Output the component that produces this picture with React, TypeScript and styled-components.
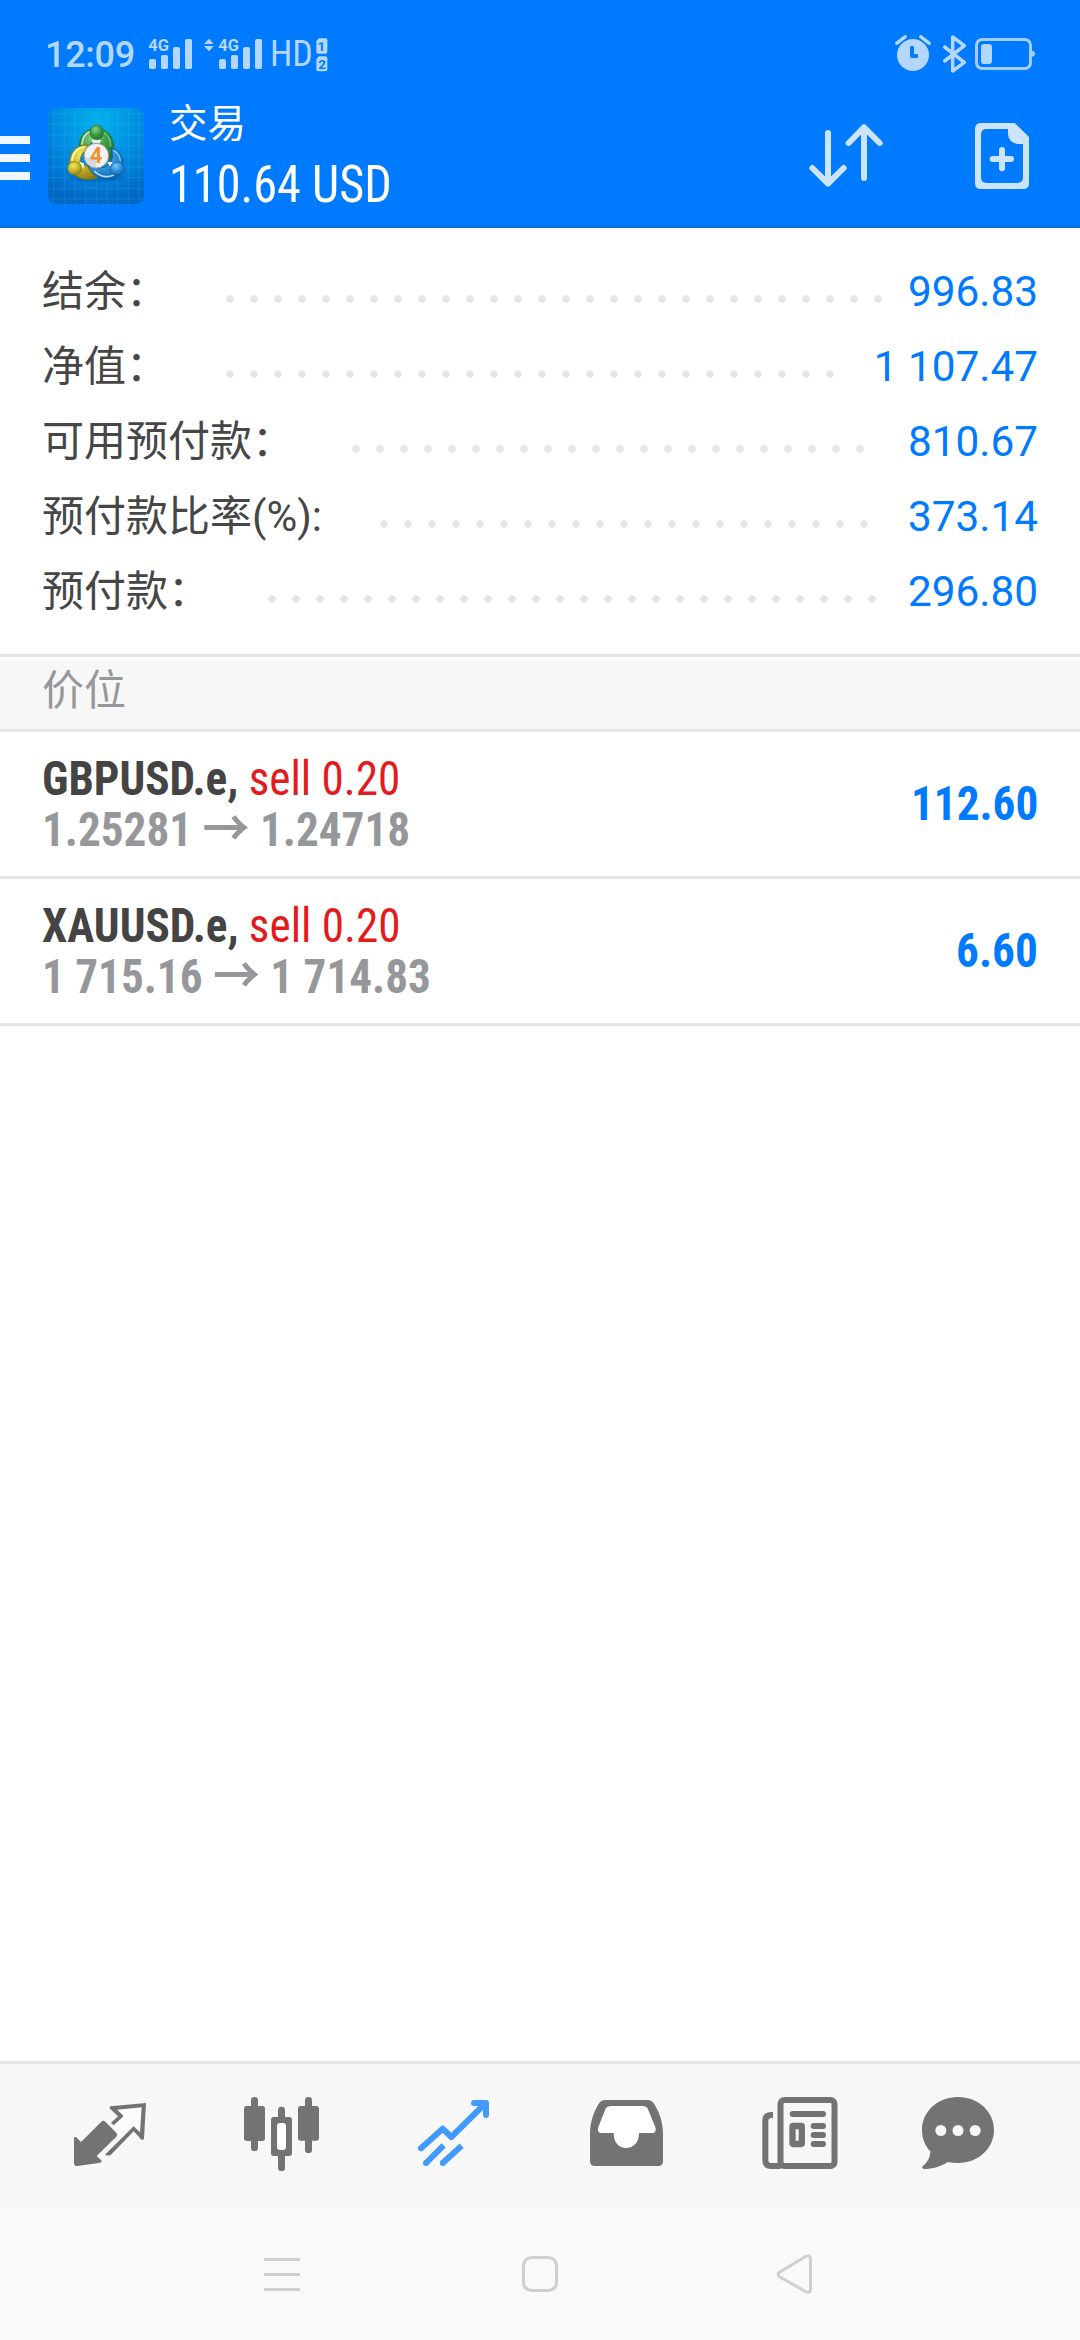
import React from "react";
import styled, { createGlobalStyle } from "styled-components";

const sans = `Roboto, "Noto Sans CJK SC", sans-serif`;
const condensed = `"Roboto Condensed", Roboto, "Noto Sans CJK SC", sans-serif`;

const GlobalStyle = createGlobalStyle`
  *, *::before, *::after { box-sizing: border-box; }
  body { margin: 0; background: #fff; font-family: ${sans}; }
  svg { display: block; flex: none; overflow: visible; }
`;

const Screen = styled.div`
  width: 1080px;
  height: 2340px;
  display: flex;
  flex-direction: column;
  background: #fff;
  overflow: hidden;
`;

const Header = styled.header`
  height: 228px;
  display: flex;
  flex-direction: column;
  background: #007aff;
  border-bottom: 3px solid #006fe6;
`;

const StatusBar = styled.div`
  height: 84px;
  padding: 28px 45px 0 45px;
  display: flex;
  align-items: flex-start;
  color: #b3d7ff;
`;

const Clock = styled.span`
  width: 103px;
  font-size: 36px;
  font-weight: 500;
  letter-spacing: -0.3px;
  line-height: 54px;
`;

const HdLabel = styled.span`
  margin-left: 7px;
  font-family: ${condensed};
  font-stretch: condensed;
  font-size: 36px;
  line-height: 52px;
  width: 46px;
`;

const Spacer = styled.div`
  flex: 1;
`;

const Toolbar = styled.div`
  height: 141px;
  display: flex;
  align-items: flex-start;
`;

const MenuButton = styled.div`
  width: 30px;
  margin: 52px 18px 0 0;
  display: flex;
  flex-direction: column;
  gap: 10px;
`;

const MenuLine = styled.span`
  height: 8px;
  background: #f0f7ff;
`;

const LogoBox = styled.div`
  margin-top: 24px;
`;

const TitleBlock = styled.div`
  margin-left: 25px;
  display: flex;
  flex-direction: column;
  color: #fff;
`;

const Title = styled.span`
  margin-top: 15px;
  font-size: 38.5px;
  line-height: 50px;
`;

const Profit = styled.span`
  margin-top: 1px;
  font-family: ${condensed};
  font-stretch: condensed;
  font-size: 51px;
  line-height: 70px;
  white-space: nowrap;
  transform: scaleX(0.947);
  transform-origin: left center;
`;

const ToolIcons = styled.div`
  margin: 36px 48px 0 auto;
  display: flex;
  gap: 87px;
`;

const Summary = styled.section`
  height: 426px;
  padding: 26px 42px 0;
  display: flex;
  flex-direction: column;
`;

const SummaryRow = styled.div`
  height: 75px;
  display: flex;
  line-height: 75px;
  font-size: 42px;
`;

const Label = styled.span`
  color: #464646;
  white-space: nowrap;
`;

const Leader = styled.span<{ $dots: number }>`
  width: ${(p) => p.$dots * 24}px;
  height: 8px;
  margin: 41px 0 0 50px;
  background: radial-gradient(circle at 12px 4px, #e5e5e5 3.4px, transparent 4.1px) 0 0 / 24px 8px repeat-x;
`;

const Value = styled.span`
  margin-left: auto;
  font-size: 42.3px;
  color: #007aff;
`;

const SectionHead = styled.div`
  height: 78px;
  padding: 3px 0 0;
  border-top: 3px solid #e5e5e5;
  border-bottom: 3px solid #e5e5e5;
`;

const SectionTitle = styled.div`
  height: 69px;
  padding: 0 42px;
  background: #f7f7f7;
  color: #96979b;
  font-size: 42px;
  line-height: 62px;
`;

const Position = styled.div`
  height: 147px;
  padding: 0 42px;
  display: flex;
  align-items: center;
  justify-content: space-between;
  border-bottom: 3px solid #e5e5e5;
  font-family: ${condensed};
  font-stretch: condensed;
  font-size: 48px;
  font-weight: 700;
`;

const PositionInfo = styled.div`
  display: flex;
  flex-direction: column;
  line-height: 51px;
  white-space: nowrap;
  transform: scaleX(0.941);
  transform-origin: left center;
`;

const SymbolLine = styled.div`
  height: 51px;
  color: #444;
`;

const Side = styled.span`
  color: #e21b1e;
  font-weight: 400;
`;

const PriceLine = styled.div`
  height: 51px;
  color: #96979b;
`;

const Arrow = styled.span`
  font-family: "Noto Sans CJK SC", sans-serif;
  font-size: 50px;
  line-height: 0;
`;

const Gain = styled.div`
  margin-bottom: 2px;
  color: #007aff;
  transform: scaleX(0.941);
  transform-origin: right center;
`;

const Empty = styled.div`
  flex: 1;
`;

const TabBar = styled.nav`
  height: 147px;
  padding: 0 24px;
  display: flex;
  background: #f7f7f7;
  border-top: 3px solid #e5e5e5;
`;

const Tab = styled.div<{ $active?: boolean }>`
  flex: 1;
  display: flex;
  align-items: center;
  justify-content: center;
  color: ${(p) => (p.$active ? "#419bff" : "#737373")};
`;

const SystemNav = styled.div`
  height: 132px;
  padding: 0 240px;
  display: flex;
  align-items: center;
  justify-content: space-between;
  background: #f9f9f9;
`;

const Signal = () => (
  <svg width="45" height="34" viewBox="444 114 135 102" fill="currentColor">
    <text x="445" y="153" fontSize="49" fontWeight="700" fontFamily="Roboto" textLength="62" lengthAdjust="spacingAndGlyphs">4G</text>
    <rect x="447" y="177" width="21" height="30" rx="5" />
    <rect x="483" y="165" width="21" height="42" rx="5" />
    <rect x="519" y="141" width="21" height="66" rx="5" />
    <rect x="555" y="117" width="21" height="90" rx="5" />
  </svg>
);

const DataArrows = () => (
  <svg width="12" height="34" viewBox="608 114 36 102" fill="currentColor">
    <path d="M626 116L640 132H611Z M611 138H640L626 154Z" />
  </svg>
);

const SimBadges = () => (
  <svg width="12" height="34" viewBox="947 113 36 102" fill="currentColor">
    <path d="M956 114H975Q981 114 981 120V154Q981 160 975 160H954Q948 160 948 154V122Z" />
    <path d="M956 168H975Q981 168 981 174V207Q981 213 975 213H954Q948 213 948 207V176Z" />
    <g fill="#007aff" fontSize="40" fontWeight="700" fontFamily="Roboto" textAnchor="middle">
      <text x="963" y="151">1</text>
      <text x="965" y="205">2</text>
    </g>
  </svg>
);

const StatusIcons = () => (
  <svg width="142" height="42" viewBox="339 99 426 126" fill="none" stroke="currentColor" strokeLinecap="round" strokeLinejoin="round">
    <circle cx="399" cy="165" r="48" fill="currentColor" stroke="none" />
    <path d="M350 130L376 110M422 110L448 130" strokeWidth="10" />
    <path d="M396 143V168H409" stroke="#007aff" strokeWidth="12" />
    <path d="M494 141L553 187L518 213V111L553 137L494 183" strokeWidth="10.5" />
    <rect x="589.5" y="118.500" width="162" height="87" rx="17" strokeWidth="9" opacity="0.9" />
    <path d="M756 152Q765 153 765 161Q765 169 756 170Z" fill="currentColor" stroke="none" opacity="0.9" />
    <rect x="603" y="132" width="33" height="60" rx="10" fill="currentColor" stroke="none" />
  </svg>
);

const SortIcon = () => (
  <svg width="78" height="72" viewBox="81 360 234 216" fill="none" stroke="#cce4ff" strokeWidth="18" strokeLinecap="round" strokeLinejoin="round">
    <path d="M144 399V550M97 504L144 551L191 504" />
    <path d="M252 534V382M206 429L252 382L299 429" />
  </svg>
);

const NewOrderIcon = () => (
  <svg width="60" height="72" viewBox="576 360 180 216">
    <path
      fill="#cce4ff"
      fillRule="evenodd"
      d="M603 369H704L747 411V549Q747 567 729 567H603Q585 567 585 549V387Q585 369 603 369Z
         M620 387Q603 387 603 404V532Q603 549 620 549H712Q729 549 729 532V432H712Q686 428 684 403V387Z"
    />
    <path d="M638 477H693M666 450V505" stroke="#cce4ff" strokeWidth="18" strokeLinecap="round" />
  </svg>
);

const gridLines = [161, 193, 225, 257, 289, 321, 353, 385, 417];

const Logo = () => (
  <svg width="96" height="96" viewBox="144 324 288 288">
    <defs>
      <radialGradient id="sky" cx="0.52" cy="0.15" r="0.85">
        <stop offset="0" stopColor="#00b2ec" />
        <stop offset="0.55" stopColor="#008adf" />
        <stop offset="1" stopColor="#0067c4" />
      </radialGradient>
      <radialGradient id="green" cx="0.4" cy="0.3" r="0.8">
        <stop offset="0" stopColor="#8fd08a" />
        <stop offset="0.5" stopColor="#3a9a43" />
        <stop offset="1" stopColor="#1a6d2c" />
      </radialGradient>
      <radialGradient id="gold" cx="0.4" cy="0.3" r="0.8">
        <stop offset="0" stopColor="#f1e862" />
        <stop offset="0.5" stopColor="#c4b32a" />
        <stop offset="1" stopColor="#857712" />
      </radialGradient>
      <radialGradient id="blue" cx="0.4" cy="0.3" r="0.8">
        <stop offset="0" stopColor="#7cc8f3" />
        <stop offset="0.5" stopColor="#2b8fd6" />
        <stop offset="1" stopColor="#0c5aa6" />
      </radialGradient>
    </defs>
    <rect x="144" y="324" width="288" height="288" rx="24" fill="url(#sky)" />
    <g stroke="#5cc4f4" strokeWidth="2" opacity="0.28">
      {gridLines.map((p) => (
        <path key={p} d={`M${p} 324V612M144 ${p + 180}H432`} />
      ))}
    </g>
    <ellipse cx="290" cy="532" rx="80" ry="13" fill="#004f9c" opacity="0.35" />
    <path d="M238 442C238 402 262 386 290 386C320 386 342 412 341 442C340 462 334 476 326 484L316 446Q290 404 262 440Z" fill="url(#green)" stroke="#226f30" strokeWidth="3" />
    <path d="M246 432C249 410 258 400 268 396" stroke="#c6ecc0" strokeWidth="5" fill="none" strokeLinecap="round" />
    <path d="M312 398C324 406 331 420 332 438" stroke="#7cc47c" strokeWidth="4" fill="none" strokeLinecap="round" />
    <path d="M334 444C358 448 370 472 370 504C362 528 340 539 316 537C290 534 270 518 262 498L300 504Q332 502 338 470Z" fill="url(#blue)" stroke="#0f5ca3" strokeWidth="3" />
    <path d="M284 514C300 530 320 533 340 526" stroke="#a8dcfa" strokeWidth="5" fill="none" strokeLinecap="round" />
    <path d="M341 452C353 458 360 470 361 482" stroke="#8fcdf3" strokeWidth="4" fill="none" strokeLinecap="round" />
    <path d="M209 496C206 462 224 436 262 434L266 446Q240 456 240 490L262 498Q272 520 292 533C264 543 222 540 209 500Z" fill="url(#gold)" stroke="#84760f" strokeWidth="3" />
    <path d="M216 480C219 458 232 444 252 441" stroke="#fbf7a4" strokeWidth="6" fill="none" strokeLinecap="round" />
    <path d="M275 421L289 414L303 421L298 434H280Z" fill="#e8f4e8" />
    <path d="M240 486L252 490L250 506L240 498Z" fill="#fbf9d8" />
    <path d="M322 486L338 486L330 500Z" fill="#e4f3fd" />
    <ellipse cx="290" cy="397" rx="20" ry="22" fill="url(#green)" stroke="#226f30" strokeWidth="2" />
    <ellipse cx="224" cy="505" rx="21" ry="20" fill="url(#gold)" stroke="#84760f" strokeWidth="2" />
    <ellipse cx="352" cy="506" rx="21" ry="20" fill="url(#blue)" stroke="#0f5ca3" strokeWidth="2" />
    <circle cx="289" cy="467" r="37" fill="#f1f1f3" stroke="#9a9a8c" strokeWidth="3" />
    <path d="M255 472A35 35 0 0 0 289 502V472Z" fill="#d8d9de" />
    <text x="288" y="490" textAnchor="middle" fontFamily="Roboto" fontSize="64" fontWeight="700" fill="#f3912f">4</text>
  </svg>
);

const QuotesIcon = () => (
  <svg width="96" height="96" viewBox="66 144 288 288" fill="currentColor">
    <path d="M213 213L231 209L305 202L300 277L281 259L240 300L218 256L249 228Z" fill="#fff" opacity="0.6" />
    <path d="M184 245Q190 240 196 245L229 278Q234 284 229 290L170 348L184 361Q187 366 181 368L112 378Q102 378 102 368V293Q104 289 109 292L123 306Z" />
    <path d="M211 199L318 189L312 296Q308 302 303 298L281 274L213 344Q210 347 198 346Q195 344 198 341L281 259L300 277L305 202L231 209L249 226Q250 229 248 231L221 256L213 248L234 229L210 206Q207 201 211 199Z" />
  </svg>
);

const ChartsIcon = () => (
  <svg width="96" height="96" viewBox="582 144 288 288" fill="currentColor">
    <rect x="633" y="171" width="21" height="162" rx="10" />
    <rect x="612" y="198" width="63" height="105" rx="8" />
    <rect x="714" y="200" width="21" height="50" rx="10" />
    <rect x="714" y="335" width="21" height="58" rx="10" />
    <rect x="693" y="231" width="63" height="117" rx="8" />
    <rect x="711" y="249" width="27" height="81" rx="9" fill="#fff" />
    <rect x="795" y="171" width="21" height="168" rx="10" />
    <rect x="774" y="198" width="63" height="104" rx="8" />
  </svg>
);

const TradeIcon = () => (
  <svg width="96" height="96" viewBox="78 144 288 288" fill="none" stroke="currentColor" strokeWidth="18" strokeLinejoin="round">
    <path d="M123 325L188 266L214 291L314 192" strokeLinecap="round" />
    <path d="M282 189H318V225" strokeLinecap="round" />
    <path d="M138 369L191 316M188 369L245 317" />
    <circle cx="138" cy="369" r="9" fill="currentColor" stroke="none" />
    <circle cx="188.500" cy="369" r="9" fill="currentColor" stroke="none" />
  </svg>
);

const HistoryIcon = () => (
  <svg width="96" height="96" viewBox="594 144 288 288">
    <path fill="currentColor" d="M630 280C630 242 645 208 658 189Q664 180 675 180H804Q814 180 820 188C835 210 849 242 849 280V364Q849 378 835 378H645Q630 378 630 364Z" />
    <path fill="#fff" d="M676 208Q681 198 693 198H787Q800 198 804 208L827 264Q829 279 817 279H777C777 308 760 324 739 324C716 324 701 308 701 279H665Q651 279 654 264Z" />
  </svg>
);

const NewsIcon = () => (
  <svg width="96" height="96" viewBox="90 144 288 288" fill="none" stroke="currentColor">
    <rect x="181.500" y="180" width="162" height="198" rx="12" strokeWidth="18" />
    <path d="M159 225H152Q136 226 136 241V360Q136 378 153 378H182" strokeWidth="18" />
    <path d="M218 222H309M281 258H309M281 285H309M281 312H309" strokeWidth="18" strokeLinecap="round" />
    <rect x="217.500" y="258" width="28" height="54" rx="2" strokeWidth="19" />
  </svg>
);

const ChatIcon = () => (
  <svg width="96" height="96" viewBox="606 144 288 288">
    <path fill="currentColor" d="M714 171C775 171 822 215 822 270C822 325 775 369 714 369Q698 369 683 366C662 380 638 387 612 387Q604 384 608 379C624 366 631 350 631 334C615 317 606 295 606 270C606 215 653 171 714 171Z" />
    <g fill="#f7f7f7">
      <circle cx="662.500" cy="271.500" r="16.500" />
      <circle cx="714" cy="271.500" r="16.500" />
      <circle cx="765.500" cy="271.500" r="16.500" />
    </g>
  </svg>
);

const NavIcon = ({ children }: { children: React.ReactNode }) => (
  <svg width="84" height="60" viewBox="0 0 84 60" fill="none" stroke="#cfcfcf" strokeWidth="3" strokeLinejoin="round">
    {children}
  </svg>
);

const summary = [
  { label: "结余：", dots: 28, value: "996.83" },
  { label: "净值：", dots: 26, value: "1 107.47" },
  { label: "可用预付款：", dots: 22, value: "810.67" },
  { label: "预付款比率(%):", dots: 21, value: "373.14" },
  { label: "预付款：", dots: 26, value: "296.80" },
];

const positions = [
  { symbol: "GBPUSD.e", side: "sell 0.20", open: "1.25281", now: "1.24718", gain: "112.60" },
  { symbol: "XAUUSD.e", side: "sell 0.20", open: "1 715.16", now: "1 714.83", gain: "6.60" },
];

const Gap = styled.span<{ $w: number }>`
  width: ${(p) => p.$w}px;
`;

const StatusArt = styled.div<{ $top: number }>`
  margin-top: ${(p) => p.$top}px;
  display: flex;
`;

export default function App() {
  return (
    <>
      <GlobalStyle />
      <Screen>
        <Header>
          <StatusBar>
            <Clock>12:09</Clock>
            <StatusArt $top={10}>
              <Signal />
              <Gap $w={10} />
              <DataArrows />
              <Gap $w={3} />
              <Signal />
            </StatusArt>
            <HdLabel>HD</HdLabel>
            <StatusArt $top={10}>
              <SimBadges />
            </StatusArt>
            <Spacer />
            <StatusArt $top={5}>
              <StatusIcons />
            </StatusArt>
          </StatusBar>
          <Toolbar>
            <MenuButton>
              <MenuLine />
              <MenuLine />
              <MenuLine />
            </MenuButton>
            <LogoBox>
              <Logo />
            </LogoBox>
            <TitleBlock>
              <Title>交易</Title>
              <Profit>110.64 USD</Profit>
            </TitleBlock>
            <ToolIcons>
              <SortIcon />
              <NewOrderIcon />
            </ToolIcons>
          </Toolbar>
        </Header>
        <Summary>
          {summary.map((row) => (
            <SummaryRow key={row.label}>
              <Label>{row.label}</Label>
              <Leader $dots={row.dots} />
              <Value>{row.value}</Value>
            </SummaryRow>
          ))}
        </Summary>
        <SectionHead>
          <SectionTitle>价位</SectionTitle>
        </SectionHead>
        {positions.map((p) => (
          <Position key={p.symbol}>
            <PositionInfo>
              <SymbolLine>
                {p.symbol}, <Side>{p.side}</Side>
              </SymbolLine>
              <PriceLine>
                {p.open} <Arrow>→</Arrow> {p.now}
              </PriceLine>
            </PositionInfo>
            <Gain>{p.gain}</Gain>
          </Position>
        ))}
        <Empty />
        <TabBar>
          <Tab><QuotesIcon /></Tab>
          <Tab><ChartsIcon /></Tab>
          <Tab $active><TradeIcon /></Tab>
          <Tab><HistoryIcon /></Tab>
          <Tab><NewsIcon /></Tab>
          <Tab><ChatIcon /></Tab>
        </TabBar>
        <SystemNav>
          <NavIcon>
            <path d="M24 15.500H60M24 30.500H60M24 45.500H60" />
          </NavIcon>
          <NavIcon>
            <rect x="25.500" y="13.500" width="33" height="33" rx="8" />
          </NavIcon>
          <NavIcon>
            <path d="M24 28L49.500 12.500Q54.500 10.500 54.500 15V45Q54.500 50 49.500 47.500L24 33Q20 30 24 28Z" />
          </NavIcon>
        </SystemNav>
      </Screen>
    </>
  );
}
